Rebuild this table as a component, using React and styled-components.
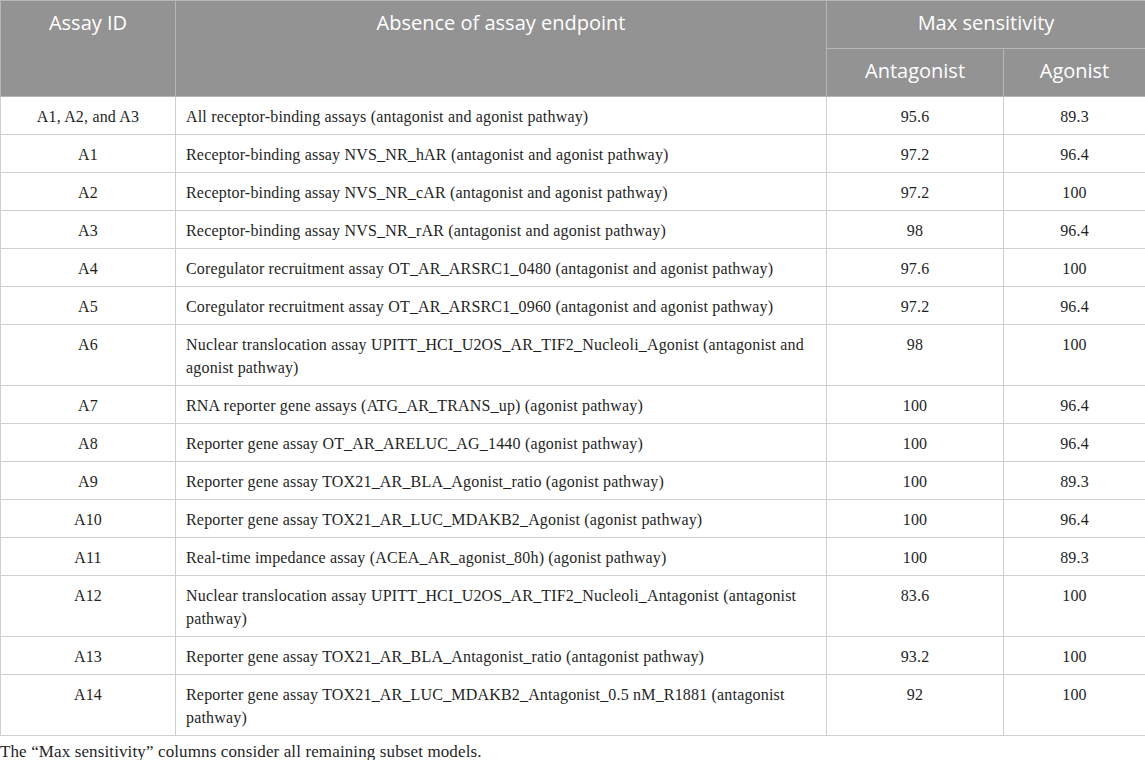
import React from 'react';
import styled, { createGlobalStyle } from 'styled-components';

const GlobalStyle = createGlobalStyle`
  html, body {
    margin: 0;
    padding: 0;
    background: #ffffff;
  }
`;

const Wrapper = styled.div`
  width: 1145px;
  font-family: "Liberation Serif", "Times New Roman", serif;
  color: #1f1f1f;
`;

const Table = styled.table`
  width: 1145px;
  border-collapse: collapse;
  table-layout: fixed;
  border: 1px solid #cfcfcf;
`;

const HeadCell = styled.th`
  background: #939393;
  color: #ffffff;
  font-family: "Open Sans", "Noto Sans", sans-serif;
  font-weight: 400;
  font-size: 20px;
  line-height: 26px;
  height: 26px;
  padding: 9px 10px 12px;
  text-align: center;
  vertical-align: top;
  border: 1px solid #b6b6b6;
`;

const Cell = styled.td`
  font-size: 16px;
  letter-spacing: 0.18px;
  line-height: 23px;
  padding: 8px 10px 6px;
  text-align: ${p => p.align || 'center'};
  vertical-align: top;
  border: 1px solid #cfcfcf;
`;

const Note = styled.p`
  margin: 4px 0 0;
  font-size: 17px;
  letter-spacing: 0.12px;
  line-height: 24px;
`;

const rows = [
  ['A1, A2, and A3', 'All receptor-binding assays (antagonist and agonist pathway)', '95.6', '89.3'],
  ['A1', 'Receptor-binding assay NVS_NR_hAR (antagonist and agonist pathway)', '97.2', '96.4'],
  ['A2', 'Receptor-binding assay NVS_NR_cAR (antagonist and agonist pathway)', '97.2', '100'],
  ['A3', 'Receptor-binding assay NVS_NR_rAR (antagonist and agonist pathway)', '98', '96.4'],
  ['A4', 'Coregulator recruitment assay OT_AR_ARSRC1_0480 (antagonist and agonist pathway)', '97.6', '100'],
  ['A5', 'Coregulator recruitment assay OT_AR_ARSRC1_0960 (antagonist and agonist pathway)', '97.2', '96.4'],
  ['A6', 'Nuclear translocation assay UPITT_HCI_U2OS_AR_TIF2_Nucleoli_Agonist (antagonist and agonist pathway)', '98', '100'],
  ['A7', 'RNA reporter gene assays (ATG_AR_TRANS_up) (agonist pathway)', '100', '96.4'],
  ['A8', 'Reporter gene assay OT_AR_ARELUC_AG_1440 (agonist pathway)', '100', '96.4'],
  ['A9', 'Reporter gene assay TOX21_AR_BLA_Agonist_ratio (agonist pathway)', '100', '89.3'],
  ['A10', 'Reporter gene assay TOX21_AR_LUC_MDAKB2_Agonist (agonist pathway)', '100', '96.4'],
  ['A11', 'Real-time impedance assay (ACEA_AR_agonist_80h) (agonist pathway)', '100', '89.3'],
  ['A12', 'Nuclear translocation assay UPITT_HCI_U2OS_AR_TIF2_Nucleoli_Antagonist (antagonist pathway)', '83.6', '100'],
  ['A13', 'Reporter gene assay TOX21_AR_BLA_Antagonist_ratio (antagonist pathway)', '93.2', '100'],
  ['A14', 'Reporter gene assay TOX21_AR_LUC_MDAKB2_Antagonist_0.5 nM_R1881 (antagonist pathway)', '92', '100'],
];

export default function App() {
  return (
    <Wrapper>
      <GlobalStyle />
      <Table>
        <colgroup>
          <col style={{ width: 175 }} />
          <col style={{ width: 651 }} />
          <col style={{ width: 177 }} />
          <col style={{ width: 142 }} />
        </colgroup>
        <thead>
          <tr>
            <HeadCell rowSpan={2}>Assay ID</HeadCell>
            <HeadCell rowSpan={2}>Absence of assay endpoint</HeadCell>
            <HeadCell colSpan={2}>Max sensitivity</HeadCell>
          </tr>
          <tr>
            <HeadCell>Antagonist</HeadCell>
            <HeadCell>Agonist</HeadCell>
          </tr>
        </thead>
        <tbody>
          {rows.map(r => (
            <tr key={r[0]}>
              <Cell>{r[0]}</Cell>
              <Cell align="left">{r[1]}</Cell>
              <Cell>{r[2]}</Cell>
              <Cell>{r[3]}</Cell>
            </tr>
          ))}
        </tbody>
      </Table>
      <Note>The “Max sensitivity” columns consider all remaining subset models.</Note>
    </Wrapper>
  );
}
